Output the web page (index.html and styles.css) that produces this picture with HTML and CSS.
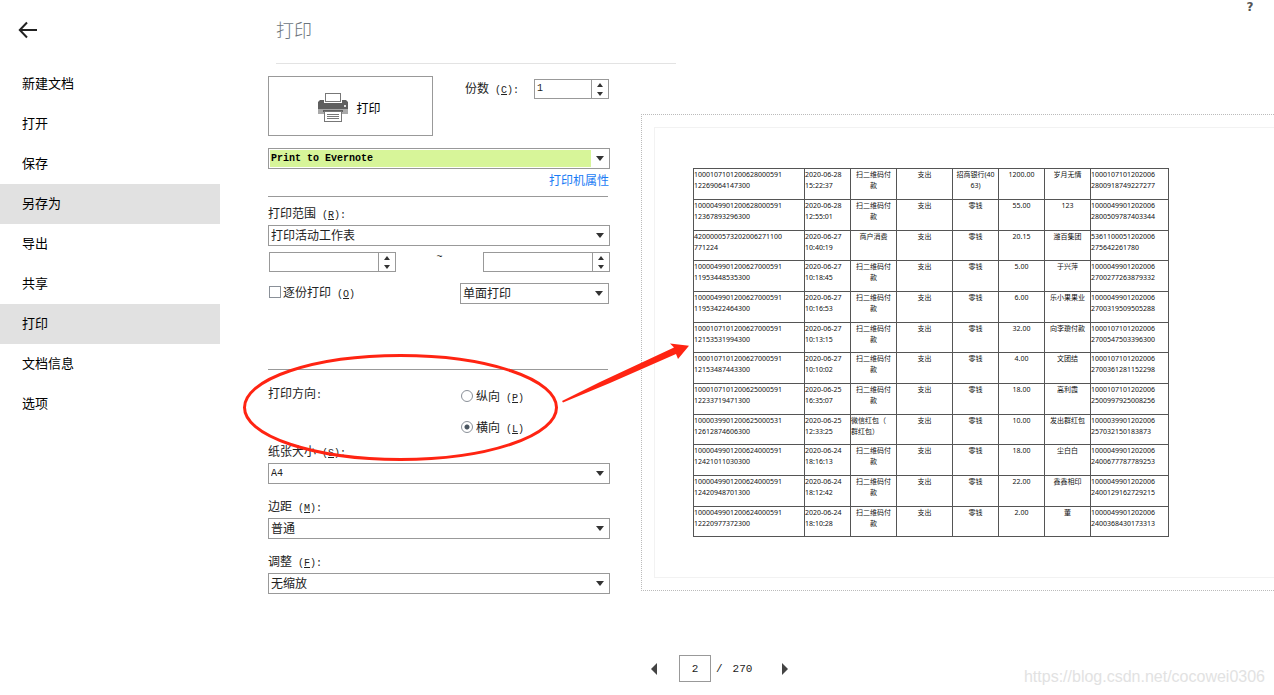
FILE: index.html
```html
<!DOCTYPE html>
<html lang="zh-CN">
<head>
<meta charset="utf-8">
<title>打印</title>
<link rel="stylesheet" href="styles.css">
</head>
<body>
<div class="app">
  <aside class="sidebar">
    <button class="back" type="button" aria-label="返回">
      <svg width="20" height="18" viewBox="0 0 20 18"><path d="M2 9H19M9 1.500L1.800 9L9 16.500" fill="none" stroke="#222" stroke-width="2"/></svg>
    </button>
    <nav class="menu">
      <a class="menu-item" href="#new">新建文档</a>
      <a class="menu-item" href="#open">打开</a>
      <a class="menu-item" href="#save">保存</a>
      <a class="menu-item active" href="#saveas">另存为</a>
      <a class="menu-item" href="#export">导出</a>
      <a class="menu-item" href="#share">共享</a>
      <a class="menu-item active" href="#print">打印</a>
      <a class="menu-item" href="#info">文档信息</a>
      <a class="menu-item" href="#options">选项</a>
    </nav>
  </aside>
  <main class="main">
    <header class="head">
      <h1 class="title">打印</h1>
      <button class="help" type="button">?</button>
    </header>
    <div class="content">
      <form class="settings">
        <div class="print-row">
          <button class="print-btn" type="button">
            <svg width="30" height="30" viewBox="0 0 30 30">
              <rect x="0" y="16" width="30" height="5" fill="#a9a9a9"/>
              <path d="M2 7H28L30 9V16H0V9Z" fill="#5f5f5f"/>
              <rect x="6" y="7" width="18" height="3" fill="#fff"/>
              <rect x="7.500" y=".5" width="15" height="8" fill="#fff" stroke="#777"/>
              <rect x="26" y="12" width="2" height="2" fill="#ddd"/>
              <rect x="5" y="17" width="20" height="2" fill="#5f5f5f"/>
              <rect x="6.500" y="18.500" width="17" height="10" fill="#fff" stroke="#777"/>
              <path d="M9 21.500H21M9 23.500H21M9 25.500H21" stroke="#777"/>
            </svg>
            <span>打印</span>
          </button>
          <label class="copies-label" for="copies">份数<span class="key"> (<u>C</u>):</span></label>
          <div class="spin copies">
            <input id="copies" type="text" value="1">
            <div class="steps"><button type="button" class="up" aria-label="增加"></button><button type="button" class="down" aria-label="减少"></button></div>
          </div>
        </div>
        <div class="combo printer">
          <select class="latin green" aria-label="打印机"><option>Print to Evernote</option></select>
        </div>
        <a class="props" href="#props">打印机属性</a>
        <hr class="rule">
        <div class="field range">
          <label for="range">打印范围<span class="key"> (<u>R</u>):</span></label>
          <div class="combo"><select id="range"><option>打印活动工作表</option></select></div>
        </div>
        <div class="pages">
          <div class="spin">
            <input type="text" aria-label="起始页">
            <div class="steps"><button type="button" class="up" aria-label="增加"></button><button type="button" class="down" aria-label="减少"></button></div>
          </div>
          <span class="key tilde">~</span>
          <div class="spin">
            <input type="text" aria-label="结束页">
            <div class="steps"><button type="button" class="up" aria-label="增加"></button><button type="button" class="down" aria-label="减少"></button></div>
          </div>
        </div>
        <div class="sides">
          <label class="check"><input type="checkbox"><span>逐份打印<span class="key"> (<u>O</u>)</span></span></label>
          <div class="combo small"><select aria-label="单双面"><option>单面打印</option></select></div>
        </div>
        <hr class="rule">
        <fieldset class="orient">
          <legend>打印方向<span class="key">:</span></legend>
          <div class="radios">
            <label class="check"><input type="radio" name="orient"><span>纵向<span class="key"> (<u>P</u>)</span></span></label>
            <label class="check"><input type="radio" name="orient" checked><span>横向<span class="key"> (<u>L</u>)</span></span></label>
          </div>
        </fieldset>
        <div class="fields">
          <div class="field">
            <label for="paper">纸张大小<span class="key"> (<u>S</u>):</span></label>
            <div class="combo"><select id="paper" class="latin"><option>A4</option></select></div>
          </div>
          <div class="field">
            <label for="margin">边距<span class="key"> (<u>M</u>):</span></label>
            <div class="combo"><select id="margin"><option>普通</option></select></div>
          </div>
          <div class="field">
            <label for="scale">调整<span class="key"> (<u>F</u>):</span></label>
            <div class="combo"><select id="scale"><option>无缩放</option></select></div>
          </div>
        </div>
      </form>
      <section class="preview">
        <div class="canvas">
          <div class="sheet">
            <table class="bill">
              <colgroup><col class="c-order"><col class="c-mid"><col class="c-mid"><col class="c-kind"><col class="c-mid"><col class="c-mid"><col class="c-mid"><col class="c-shop"></colgroup>
              <tbody>
              <tr><td>1000107101200628000591<br>12269064147300</td><td>2020-06-28<br>15:22:37</td><td>扫二维码付<br>款</td><td>支出</td><td>招商银行(40<br>63)</td><td>1200.00</td><td>岁月无情</td><td>1000107101202006<br>2800918749227277</td></tr>
              <tr><td>1000049901200628000591<br>12367893296300</td><td>2020-06-28<br>12:55:01</td><td>扫二维码付<br>款</td><td>支出</td><td>零钱</td><td>55.00</td><td>123</td><td>1000049901202006<br>2800509787403344</td></tr>
              <tr><td>4200000573202006271100<br>771224</td><td>2020-06-27<br>10:40:19</td><td>商户消费</td><td>支出</td><td>零钱</td><td>20.15</td><td>潍百集团</td><td>5361100051202006<br>275642261780</td></tr>
              <tr><td>1000049901200627000591<br>11953448535300</td><td>2020-06-27<br>10:18:45</td><td>扫二维码付<br>款</td><td>支出</td><td>零钱</td><td>5.00</td><td>于兴萍</td><td>1000049901202006<br>2700277263879332</td></tr>
              <tr><td>1000049901200627000591<br>11953422464300</td><td>2020-06-27<br>10:16:53</td><td>扫二维码付<br>款</td><td>支出</td><td>零钱</td><td>6.00</td><td>乐小果果业</td><td>1000049901202006<br>2700319509505288</td></tr>
              <tr><td>1000107101200627000591<br>12153531994300</td><td>2020-06-27<br>10:13:15</td><td>扫二维码付<br>款</td><td>支出</td><td>零钱</td><td>32.00</td><td>向李瓊付款</td><td>1000107101202006<br>2700547503396300</td></tr>
              <tr><td>1000107101200627000591<br>12153487443300</td><td>2020-06-27<br>10:10:02</td><td>扫二维码付<br>款</td><td>支出</td><td>零钱</td><td>4.00</td><td>文团结</td><td>1000107101202006<br>2700361281152298</td></tr>
              <tr><td>1000107101200625000591<br>12233719471300</td><td>2020-06-25<br>16:35:07</td><td>扫二维码付<br>款</td><td>支出</td><td>零钱</td><td>18.00</td><td>高利霞</td><td>1000107101202006<br>2500997925008256</td></tr>
              <tr><td>1000039901200625000531<br>12612874606300</td><td>2020-06-25<br>12:33:25</td><td class="start">微信红包（<br>群红包）</td><td>支出</td><td>零钱</td><td>10.00</td><td>发出群红包</td><td>1000039901202006<br>257032150183873</td></tr>
              <tr><td>1000049901200624000591<br>12421011030300</td><td>2020-06-24<br>18:16:13</td><td>扫二维码付<br>款</td><td>支出</td><td>零钱</td><td>18.00</td><td>尘白白</td><td>1000049901202006<br>2400677787789253</td></tr>
              <tr><td>1000049901200624000591<br>12420948701300</td><td>2020-06-24<br>18:12:42</td><td>扫二维码付<br>款</td><td>支出</td><td>零钱</td><td>22.00</td><td>鑫鑫相印</td><td>1000049901202006<br>2400129162729215</td></tr>
              <tr><td>1000049901200624000591<br>12220977372300</td><td>2020-06-24<br>18:10:28</td><td>扫二维码付<br>款</td><td>支出</td><td>零钱</td><td>2.00</td><td>董</td><td>1000049901202006<br>2400368430173313</td></tr>
              </tbody>
            </table>
          </div>
        </div>
        <div class="pager">
          <button type="button" class="page-btn prev" aria-label="上一页"></button>
          <input class="page-no" type="text" value="2" aria-label="页码">
          <span class="slash">/</span>
          <span class="total">270</span>
          <button type="button" class="page-btn next" aria-label="下一页"></button>
        </div>
      </section>
    </div>
  </main>
  <svg class="mark" width="460" height="120" viewBox="240 343 460 120">
    <ellipse cx="400.500" cy="407.500" rx="156" ry="52" fill="none" stroke="#ff2412" stroke-width="3"/>
    <path d="M562 401L600 382L674 347.500L670 343.500L689 345.700L678 359L676 354L610 383L563 402.500Z" fill="#ff2412"/>
  </svg>
  <div class="watermark">https://blog.csdn.net/cocowei0306</div>
</div>
</body>
</html>
```
FILE: styles.css
```css
* { box-sizing: border-box; }
body {
  margin: 0;
  background: #fff;
  color: #222;
  font: 12px/18px "Noto Sans CJK SC", sans-serif;
}
button, input, select { font: inherit; color: inherit; margin: 0; border-radius: 0; }
button { padding: 0; border: 0; background: none; }
.app {
  position: relative;
  display: flex;
  min-height: 100vh;
  overflow: hidden;
}

.sidebar { flex: 0 0 220px; }
.back { display: block; height: 18px; margin: 21px 0 25px 18px; }
.back svg { display: block; }
.menu { display: flex; flex-direction: column; }
.menu-item {
  padding: 0 0 2px 22px;
  color: #000;
  font-size: 13px;
  line-height: 38px;
  text-decoration: none;
}
.menu-item.active { background: #e1e1e1; }

.main { flex: 1; min-width: 0; padding-left: 48px; }
.head { display: flex; justify-content: space-between; align-items: flex-start; }
.title {
  width: 400px;
  margin: 0 0 12px 8px;
  padding: 17px 0 22px;
  border-bottom: 1px solid #e3e3e3;
  color: #6c757d;
  font-size: 18px;
  font-weight: 300;
  line-height: 24px;
}
.help { width: 16px; margin-right: 16px; font: bold 12px/14px "DejaVu Sans", sans-serif; color: #555; }
.content { display: flex; align-items: flex-start; }

.settings { flex: 0 0 342px; }
.key, .latin, .spin input { font-family: "Liberation Mono", "Noto Sans CJK SC", monospace; font-size: 10px; }
.key { line-height: 1; white-space: pre; }
.print-row { display: flex; align-items: flex-start; margin-bottom: 12px; }
.print-btn {
  display: flex;
  align-items: center;
  justify-content: center;
  gap: 8px;
  width: 165px;
  height: 60px;
  padding: 3px 2px 0 0;
  border: 1px solid #999;
  background: #fff;
  color: #000;
}
.copies-label { margin: 3px auto 0 32px; }
.spin { display: flex; width: 127px; height: 20px; border: 1px solid #999; }
.spin input { flex: 1; min-width: 0; padding: 0 2px; border: 0; outline: 0; background: #fff; }
.copies { width: 75px; margin: 3px 1px 0 0; }
.steps {
  display: flex;
  flex-direction: column;
  justify-content: center;
  align-items: center;
  gap: 5px;
  width: 17px;
  border-left: 1px solid #999;
}
.up, .down { width: 0; height: 0; border: 3px solid transparent; }
.up { border-top: 0; border-bottom: 4px solid #333; }
.down { border-bottom: 0; border-top: 4px solid #333; }

.combo { position: relative; height: 21px; }
.combo select {
  display: block;
  width: 100%;
  height: 100%;
  padding: 0 20px 2px 2px;
  border: 1px solid #999;
  appearance: none;
  background: #fff;
}
.combo .latin { padding-bottom: 0; }
.combo::after {
  content: "";
  position: absolute;
  top: 8px;
  right: 6px;
  border: 4px solid transparent;
  border-top: 5px solid #333;
  border-bottom: 0;
  pointer-events: none;
}
.combo .green {
  background: linear-gradient(#d7f599, #d7f599) 1px 1px / calc(100% - 19px) calc(100% - 2px) no-repeat;
  color: #000;
  font-weight: bold;
}
.props { display: block; margin: 2px 1px 7px 0; color: #1a7cf5; text-align: right; text-decoration: none; }
.rule { height: 1px; margin: 0 2px 0 0; border: 0; background: #999; }
.field label { display: block; }
.field .combo { margin-top: 3px; }
.range { padding: 7px 0 6px; }
.pages { display: flex; justify-content: space-between; padding-left: 1px; margin-bottom: 11px; }
.tilde { line-height: 12px; }
.sides { display: flex; justify-content: space-between; margin: 0 1px 65px; }
.small { width: 149px; }
.check { display: flex; align-items: center; height: 18px; }
.check input {
  appearance: none;
  width: 12px;
  height: 12px;
  margin-right: 2px;
  border: 1px solid #8a9098;
  background: #fff;
}
.check input[type="radio"] { border-radius: 50%; margin-right: 3px; }
.check input[type="radio"]:checked { background: radial-gradient(circle, #4a5560 2px, #fff 3px); }
.orient { display: flex; margin: 14px 0 6px; padding: 0; border: 0; min-width: 0; }
.orient legend { float: left; width: 193px; padding: 0; }
.radios { display: flex; flex-direction: column; gap: 13px; padding-top: 3px; }
.fields { display: flex; flex-direction: column; gap: 13px; }

.preview { flex: 1; min-width: 0; padding: 38px 0 0 31px; }
.canvas { padding: 12px 0 12px 12px; border: 1px dotted #bbb; border-right: 0; }
.sheet { padding: 40px 0 40px 38px; border: 1px solid #f2f2f2; border-right: 0; overflow: hidden; }
.bill {
  width: 476px;
  border-collapse: collapse;
  table-layout: fixed;
  color: #111;
  font: 7px/11px "Noto Sans", "Noto Sans CJK SC", sans-serif;
}
.c-order { width: 111px; }
.c-mid { width: 46px; }
.c-kind { width: 56px; }
.c-shop { width: 78px; }
.bill tr { height: 31px; }
.bill tr:nth-child(3n) { height: 30px; }
.bill td { padding: 0 1px; border: 1px solid #555; text-align: center; vertical-align: top; white-space: nowrap; }
.bill td:first-child, .bill td:nth-child(2), .bill td:last-child, .bill .start { padding-left: 0; text-align: left; }

.pager {
  display: flex;
  align-items: center;
  margin: 64px 0 0 10px;
  font-family: "Liberation Mono", monospace;
  font-size: 11px;
}
.page-btn { width: 0; height: 0; border: 6px solid transparent; }
.prev { border-left: 0; border-right-color: #444; }
.next { border-right: 0; border-left-color: #444; }
.page-no { width: 32px; height: 27px; margin: 0 5px 0 22px; padding: 0; border: 1px solid #999; text-align: center; }
.total { margin: 0 30px 0 10px; }

.mark { position: absolute; left: 240px; top: 343px; pointer-events: none; }
.watermark {
  position: absolute;
  right: 9px;
  bottom: 9px;
  color: #e2e2e2;
  font: 16px/18px "Liberation Sans", Arial, sans-serif;
}
```
